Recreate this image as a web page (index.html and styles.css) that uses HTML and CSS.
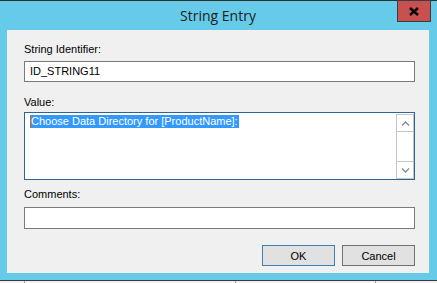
FILE: index.html
```html
<!DOCTYPE html>
<html>
<head>
  <title>String Entry</title>
  <link rel="stylesheet" href="styles.css">
</head>
<body>

<div class="window">
  <div class="titlebar">
    <span class="title">String Entry</span>
    <div class="close">
      <svg width="10" height="9" viewBox="0 0 10 9"><path d="M1 1 L9 8 M9 1 L1 8" stroke="#000" stroke-width="2.4" fill="none"/></svg>
    </div>
  </div>

  <div class="client">
    <label class="label lbl-id">String Identifier:</label>
    <div class="field field-id">ID_STRING11</div>

    <label class="label lbl-value">Value:</label>
    <div class="textbox">
      <div class="text"><span class="caret"></span><span class="sel">Choose Data Directory for [ProductName]:</span></div>
      <div class="scrollbar">
        <div class="sb-btn">
          <svg width="9" height="5" viewBox="0 0 9 5"><path d="M1 4.5 L4.5 1 L8 4.5" stroke="#8a8a8a" stroke-width="1.4" fill="none"/></svg>
        </div>
        <div class="sb-track"></div>
        <div class="sb-btn">
          <svg width="9" height="5" viewBox="0 0 9 5"><path d="M1 0.5 L4.5 4 L8 0.5" stroke="#8a8a8a" stroke-width="1.4" fill="none"/></svg>
        </div>
      </div>
    </div>

    <label class="label lbl-comments">Comments:</label>
    <div class="field field-comments"></div>

    <div class="buttons">
      <button class="btn default">OK</button>
      <button class="btn">Cancel</button>
    </div>
  </div>
</div>

<div class="behind">
  <span class="tick t1"></span><span class="tick t2"></span><span class="tick t3"></span>
</div>

</body>
</html>
```

FILE: styles.css
```css
html, body { margin: 0; padding: 0; }
body { width: 437px; height: 283px; overflow: hidden; background: #f0f0f0; font-family: "Liberation Sans", Arial, sans-serif; font-size: 11px; color: #000; }

.window { background: #65cbe9; border-top: 1px solid #2e2e2e; border-bottom: 1px solid #3a3a3a; padding: 0 8px 7px 7px; position: relative; }

.titlebar { height: 29px; display: flex; justify-content: center; align-items: center; }
.title { font-family: "Open Sans", "Noto Sans", sans-serif; font-size: 14px; color: #1c1c1c; margin-top: -1px; }
.close { position: absolute; top: -1px; right: 6px; width: 32px; height: 20px; background: #c75050; border: 1px solid #3c3c3c; display: flex; justify-content: center; align-items: center; }

.client { background: #f0f0f0; height: 243px; padding: 0 14px 0 17px; display: flex; flex-direction: column; }

.label { display: block; line-height: 13px; }
.lbl-id { margin-top: 13px; }
.lbl-value { margin-top: 14px; }
.lbl-comments { margin-top: 8px; }

.field { background: #fff; border: 1px solid #7a7a7a; height: 19px; line-height: 19px; padding-left: 5px; margin-top: 5px; }
.field-comments { height: 20px; margin-top: 6px; }

.textbox { background: #fff; border: 1px solid #2f6394; margin-top: 3px; display: flex; padding: 1px 0 0 0; box-sizing: border-box; height: 68px; }
.text { flex: 1; padding: 1px 0 0 5px; line-height: 13px; display: flex; align-items: flex-start; }
.caret { width: 1px; height: 13px; background: #c8641e; }
.sel { background: #3399ff; color: #fff; padding-right: 1px; }

.scrollbar { width: 16px; height: 63px; border: 1px solid #c4c4c4; display: flex; flex-direction: column; }
.sb-btn { height: 16px; display: flex; justify-content: center; align-items: center; }
.sb-track { flex: 1; border-top: 1px solid #c4c4c4; border-bottom: 1px solid #c4c4c4; }

.buttons { display: flex; justify-content: flex-end; gap: 7px; margin-top: 16px; }
.btn { width: 73px; height: 21px; padding: 0; background: #e1e1e1; border: 1px solid #707070; font-family: "Liberation Sans", Arial, sans-serif; font-size: 11px; color: #000; }
.btn.default { border-color: #3c7fb1; }

.behind { height: 2px; border-bottom: 1px solid #a0a0a0; position: relative; }
.tick { position: absolute; top: 0; width: 1px; height: 2px; background: #a0a0a0; }
.t1 { left: 24px; }
.t2 { left: 235px; }
.t3 { left: 375px; }
```
